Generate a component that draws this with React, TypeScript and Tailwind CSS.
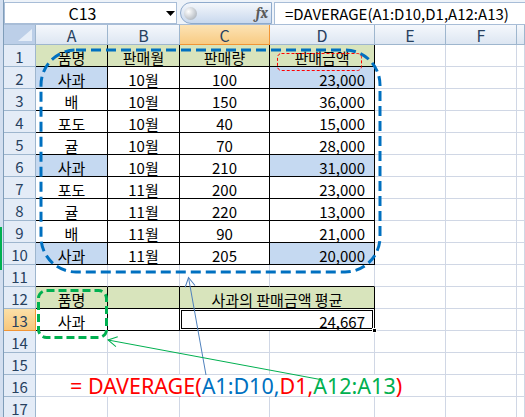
import React from "react";

type Row = [string, string, string, string];

const DATA: Row[] = [
  ["품명", "판매월", "판매량", "판매금액"],
  ["사과", "10월", "100", "23,000"],
  ["배", "10월", "150", "36,000"],
  ["포도", "10월", "40", "15,000"],
  ["귤", "10월", "70", "28,000"],
  ["사과", "10월", "210", "31,000"],
  ["포도", "11월", "200", "23,000"],
  ["귤", "11월", "220", "13,000"],
  ["배", "11월", "90", "21,000"],
  ["사과", "11월", "205", "20,000"],
];

const HILITE = [2, 6, 10];
const COLS = ["A", "B", "C", "D", "E", "F", ""];

const GRID = "border-r border-b border-[#d0d7e5]";
const BLACK = "border-r border-b border-black pt-[3px]";

function RowHead({ n }: { n: number }) {
  const active = n === 13;
  return (
    <div
      className={
        active
          ? "flex items-center justify-center border-r border-b border-[#f29536] bg-gradient-to-b from-[#fbe0a8] to-[#f7c77c] pt-[1px] text-[15px] text-[#27415f]"
          : "flex items-center justify-center border-r border-b border-[#9eb6ce] bg-[#e4ecf7] pt-[1px] text-[15px] text-[#27415f]"
      }
    >
      {n}
    </div>
  );
}

function ColHead({ label }: { label: string }) {
  const active = label === "C";
  return (
    <div
      className={
        active
          ? "flex items-center justify-center border-r border-b border-[#f29536] bg-gradient-to-b from-[#fce3b4] to-[#f8cb83] text-[16px] text-[#27415f]"
          : "flex items-center justify-center border-r border-b border-[#9eb6ce] bg-gradient-to-b from-[#f5f8fc] to-[#dde6f2] text-[16px] text-[#27415f]"
      }
    >
      {label}
    </div>
  );
}

function FormulaBar() {
  return (
    <div className="flex h-[29px] flex-col bg-[#dbe5f2]">
      <div className="flex h-[25px] items-stretch border-b border-[#a8bdd7] bg-[#eef3f9]">
        <div className="mt-[2px] flex w-[173px] items-center border border-[#a8bdd7] bg-white">
          <span className="w-[155px] text-center text-[16px] text-black">C13</span>
          <svg width="9" height="5" viewBox="0 0 9 5" className="ml-[6px]">
            <path d="M0 0H9L4.5 5Z" fill="#000" />
          </svg>
        </div>
        <div className="ml-[3px] mt-[2px] flex h-[22px] w-[92px] items-center rounded-l-full border border-[#8eaacc] bg-gradient-to-b from-[#f4f7fb] to-[#c9d9ee] pl-[3px] pr-[3px]">
          <span className="size-[13px] rounded-full bg-[radial-gradient(circle_at_35%_35%,#ffffff,#9aa3ad)]" />
          <span className="ml-auto font-serif text-[15px] font-bold italic text-[#5a5a5a]">fx</span>
        </div>
        <div className="ml-[2px] mt-[2px] flex flex-1 items-center border-l border-t border-[#a8bdd7] bg-white pl-[10px] text-[15px] text-black">
          =DAVERAGE(A1:D10,D1,A12:A13)
        </div>
      </div>
    </div>
  );
}

export default function App() {
  const rows = [];
  for (let r = 1; r <= 17; r++) {
    const cells: React.ReactNode[] = [<RowHead key="h" n={r} />];
    if (r <= 10) {
      const d = DATA[r - 1];
      const head = r === 1;
      const hi = HILITE.includes(r);
      const bgA = head ? "bg-[#d8e4bc]" : hi ? "bg-[#c5d9f1]" : "bg-white";
      const bg = head ? "bg-[#d8e4bc]" : "bg-white";
      cells.push(
        <div key="a" className={`${BLACK} ${bgA} flex items-center justify-center`}>{d[0]}</div>,
        <div key="b" className={`${BLACK} ${bg} flex items-center justify-center`}>{d[1]}</div>,
        <div key="c" className={`${BLACK} ${bg} flex items-center justify-center`}>{d[2]}</div>,
        <div
          key="d"
          className={`${BLACK} ${bgA} flex items-center ${head ? "justify-center" : "justify-end pr-[9px]"}`}
        >
          {d[3]}
        </div>
      );
      cells.push(<div key="e" className={GRID} />, <div key="f" className={GRID} />, <div key="g" className={GRID} />);
    } else if (r === 11) {
      cells.push(
        <div key="a" className="border-r border-b border-[#d0d7e5] border-b-black" />,
        <div key="b" className="border-r border-b border-[#d0d7e5] border-b-black" />,
        <div key="c" className="border-r border-b border-[#d0d7e5] border-b-black" />,
        <div key="d" className="border-r border-b border-[#d0d7e5] border-b-black" />,
        <div key="e" className={GRID} />,
        <div key="f" className={GRID} />,
        <div key="g" className={GRID} />
      );
    } else if (r === 12) {
      cells.push(
        <div key="a" className={`${BLACK} flex items-center justify-center bg-[#d8e4bc]`}>품명</div>,
        <div key="b" className={`${BLACK} bg-[#d8e4bc]`} />,
        <div key="c" className={`${BLACK} col-span-2 flex items-center justify-center bg-[#d8e4bc]`}>
          사과의 판매금액 평균
        </div>,
        <div key="e" className={GRID} />,
        <div key="f" className={GRID} />,
        <div key="g" className={GRID} />
      );
    } else if (r === 13) {
      cells.push(
        <div key="a" className={`${BLACK} flex items-center justify-center bg-white`}>사과</div>,
        <div key="b" className={`${BLACK} bg-white`} />,
        <div
          key="c"
          className={`${BLACK} relative col-span-2 flex items-center justify-end bg-white pr-[9px] shadow-[inset_0_0_0_1px_#fff,inset_0_0_0_2px_#000]`}
        >
          24,667
          <span className="absolute -bottom-[3px] -right-[3px] size-[5px] border border-white bg-black" />
        </div>,
        <div key="e" className={GRID} />,
        <div key="f" className={GRID} />,
        <div key="g" className={GRID} />
      );
    } else if (r === 16) {
      cells.push(
        <div
          key="a"
          className="col-span-5 flex items-center whitespace-nowrap border-r border-b border-[#d0d7e5] pl-[34px] pt-[1px] font-['Noto_Sans',sans-serif] text-[21.5px] text-[#ff0000]"
        >
          <span>= DAVERAGE(</span>
          <span className="text-[#0070c0]">A1:D10,</span>
          <span>D1,</span>
          <span className="text-[#00b050]">A12:A13</span>
          <span>)</span>
        </div>,
        <div key="f" className={GRID} />,
        <div key="g" className={GRID} />
      );
    } else {
      for (let c = 0; c < 7; c++) cells.push(<div key={c} className={GRID} />);
    }
    rows.push(<React.Fragment key={r}>{cells}</React.Fragment>);
  }

  return (
    <div className="relative flex h-[417px] w-[525px] overflow-hidden bg-white font-['Noto_Sans_CJK_KR','Noto_Sans',sans-serif] text-[15px] leading-none text-black">
      <div className="w-[4px] border-r border-[#7f9db9] bg-[#d3dff0]" />
      <div className="flex w-[521px] flex-col">
        <FormulaBar />
        <div className="grid grid-cols-[32px_72px_72px_90px_105px_71px_71px_8px] grid-rows-[20px_repeat(17,22px)]">
          <div className="relative border-r border-b border-[#9eb6ce] bg-[#bccfe8]">
            <svg width="14" height="12" viewBox="0 0 14 12" className="absolute bottom-[3px] right-[3px]">
              <path d="M14 0V12H0Z" fill="#e6eef8" />
            </svg>
          </div>
          {COLS.map((c, i) => (
            <ColHead key={i} label={c} />
          ))}
          {rows}
        </div>
      </div>

      <svg width="525" height="417" className="pointer-events-none absolute left-0 top-0">
        <defs>
          <marker id="ab" markerWidth="12" markerHeight="12" refX="10" refY="6" orient="auto" markerUnits="userSpaceOnUse">
            <path d="M1 1L10 6L1 11" fill="none" stroke="#4f81bd" strokeWidth="1" />
          </marker>
          <marker id="ag" markerWidth="12" markerHeight="12" refX="10" refY="6" orient="auto" markerUnits="userSpaceOnUse">
            <path d="M1 1L10 6L1 11" fill="none" stroke="#00b050" strokeWidth="1" />
          </marker>
        </defs>
        <rect x="41" y="50" width="339" height="222" rx="35" fill="none" stroke="#0070c0" strokeWidth="3" strokeDasharray="10 5" />
        <rect x="277.5" y="53.5" width="84" height="17" rx="4" fill="none" stroke="#ff0000" strokeWidth="1" strokeDasharray="3 2" />
        <rect x="38.5" y="290.5" width="68" height="47" rx="8" fill="none" stroke="#00b050" strokeWidth="3" strokeDasharray="8 4" />
        <line x1="206" y1="375" x2="188.5" y2="277.5" stroke="#4f81bd" strokeWidth="1" markerEnd="url(#ab)" />
        <line x1="323" y1="380" x2="108" y2="340" stroke="#00b050" strokeWidth="1" markerEnd="url(#ag)" />
        <path d="M1 227V270" stroke="#00b050" strokeWidth="2" />
      </svg>
    </div>
  );
}
